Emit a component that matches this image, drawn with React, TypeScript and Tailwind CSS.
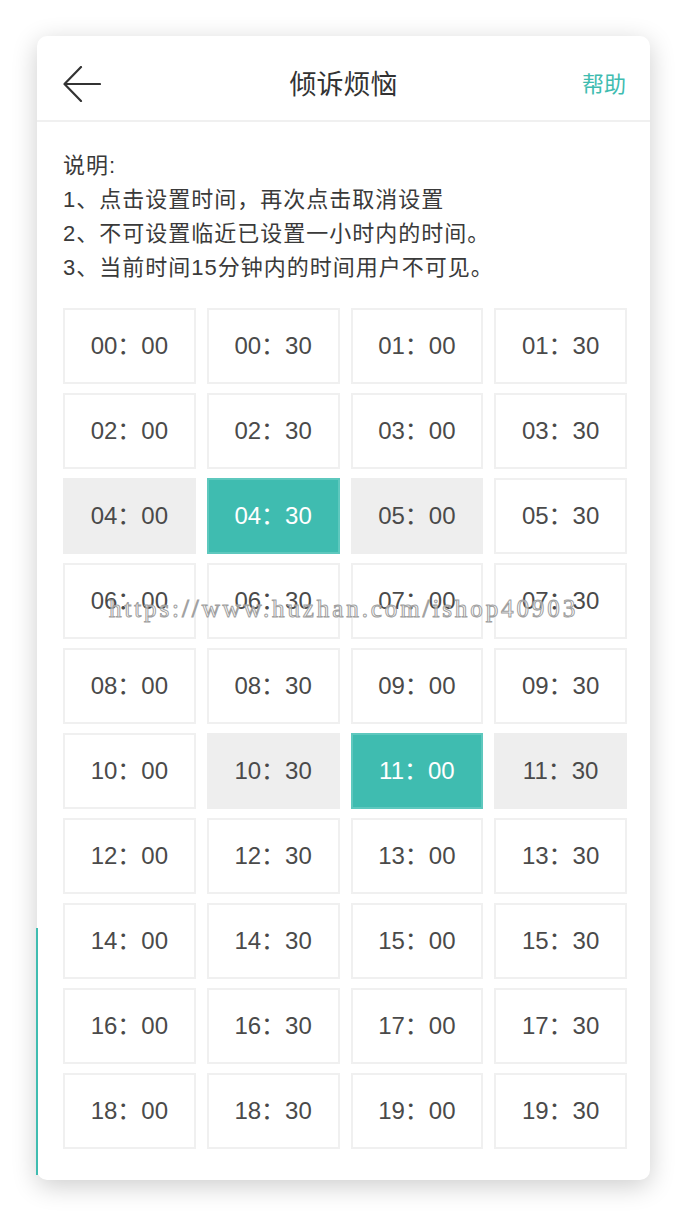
import { useState } from 'react';

const slots = Array.from({ length: 40 }, (_, i) => {
  const h = String(Math.floor(i / 2)).padStart(2, '0');
  return `${h}：${i % 2 === 0 ? '00' : '30'}`;
});

// slots that can't be picked because they sit within an hour of a chosen one
const blocked = new Set(['04：00', '05：00', '10：30', '11：30']);

export default function App() {
  const [picked, setPicked] = useState<string[]>(['04：30', '11：00']);

  const toggle = (t: string) => {
    if (blocked.has(t)) return;
    setPicked((p) => (p.includes(t) ? p.filter((x) => x !== t) : [...p, t]));
  };

  return (
    <div className="min-h-[1216px] bg-white pt-[36px] pl-[37px] font-['Liberation_Sans','Noto_Sans_CJK_SC',sans-serif]">
      <div className="relative w-[613px] h-[1144px] rounded-[10px] bg-white shadow-[0_6px_26px_rgba(0,0,0,0.2)]">
        <div className="absolute left-[-1px] top-[892px] h-[247px] w-[2px] bg-[#3fbcb0]" />

        <header className="relative flex h-[86px] items-center justify-between border-b-2 border-[#f0f0f0] pt-[12px] pl-[26px] pr-[24px]">
          <svg width="38" height="36" viewBox="0 0 38 36" fill="none" stroke="#333" strokeWidth="2.2" strokeLinecap="round" strokeLinejoin="round">
            <path d="M37 18H2M18 1L1.5 18L18 35" />
          </svg>
          <h1 className="absolute left-1/2 top-[49px] -translate-x-1/2 -translate-y-1/2 text-[27px] text-[#333]">倾诉烦恼</h1>
          <button className="text-[22px] text-[#3fbcb0]">帮助</button>
        </header>

        <div className="pl-[26px] pr-[23px] pt-[27px]">
          <div className="text-[22px] leading-[34px] tracking-[1px] text-[#3a3a3a]">
            <p>说明:</p>
            <p>1、点击设置时间，再次点击取消设置</p>
            <p>2、不可设置临近已设置一小时内的时间。</p>
            <p>3、当前时间15分钟内的时间用户不可见。</p>
          </div>

          <div className="mt-[23px] grid grid-cols-4 gap-x-[11px] gap-y-[9px]">
            {slots.map((t) => {
              const on = picked.includes(t);
              const off = blocked.has(t);
              return (
                <button
                  key={t}
                  onClick={() => toggle(t)}
                  className={`flex h-[76px] items-center justify-center border-2 text-[24px] ${
                    on
                      ? 'border-[#5ec8be] bg-[#3fbcb0] text-white'
                      : off
                        ? 'border-[#eeeeee] bg-[#eeeeee] text-[#4a4a4a]'
                        : 'border-[#f0f0f0] bg-white text-[#4a4a4a]'
                  }`}
                >
                  {t}
                </button>
              );
            })}
          </div>
        </div>

        <div className="pointer-events-none absolute left-[72px] top-[554px] whitespace-nowrap font-['Liberation_Serif',serif] text-[25px] tracking-[2.9px] text-[rgba(255,255,255,0.55)] [-webkit-text-stroke:1px_#a0a0a0]">
          https://www.huzhan.com/ishop40903
        </div>
      </div>
    </div>
  );
}
